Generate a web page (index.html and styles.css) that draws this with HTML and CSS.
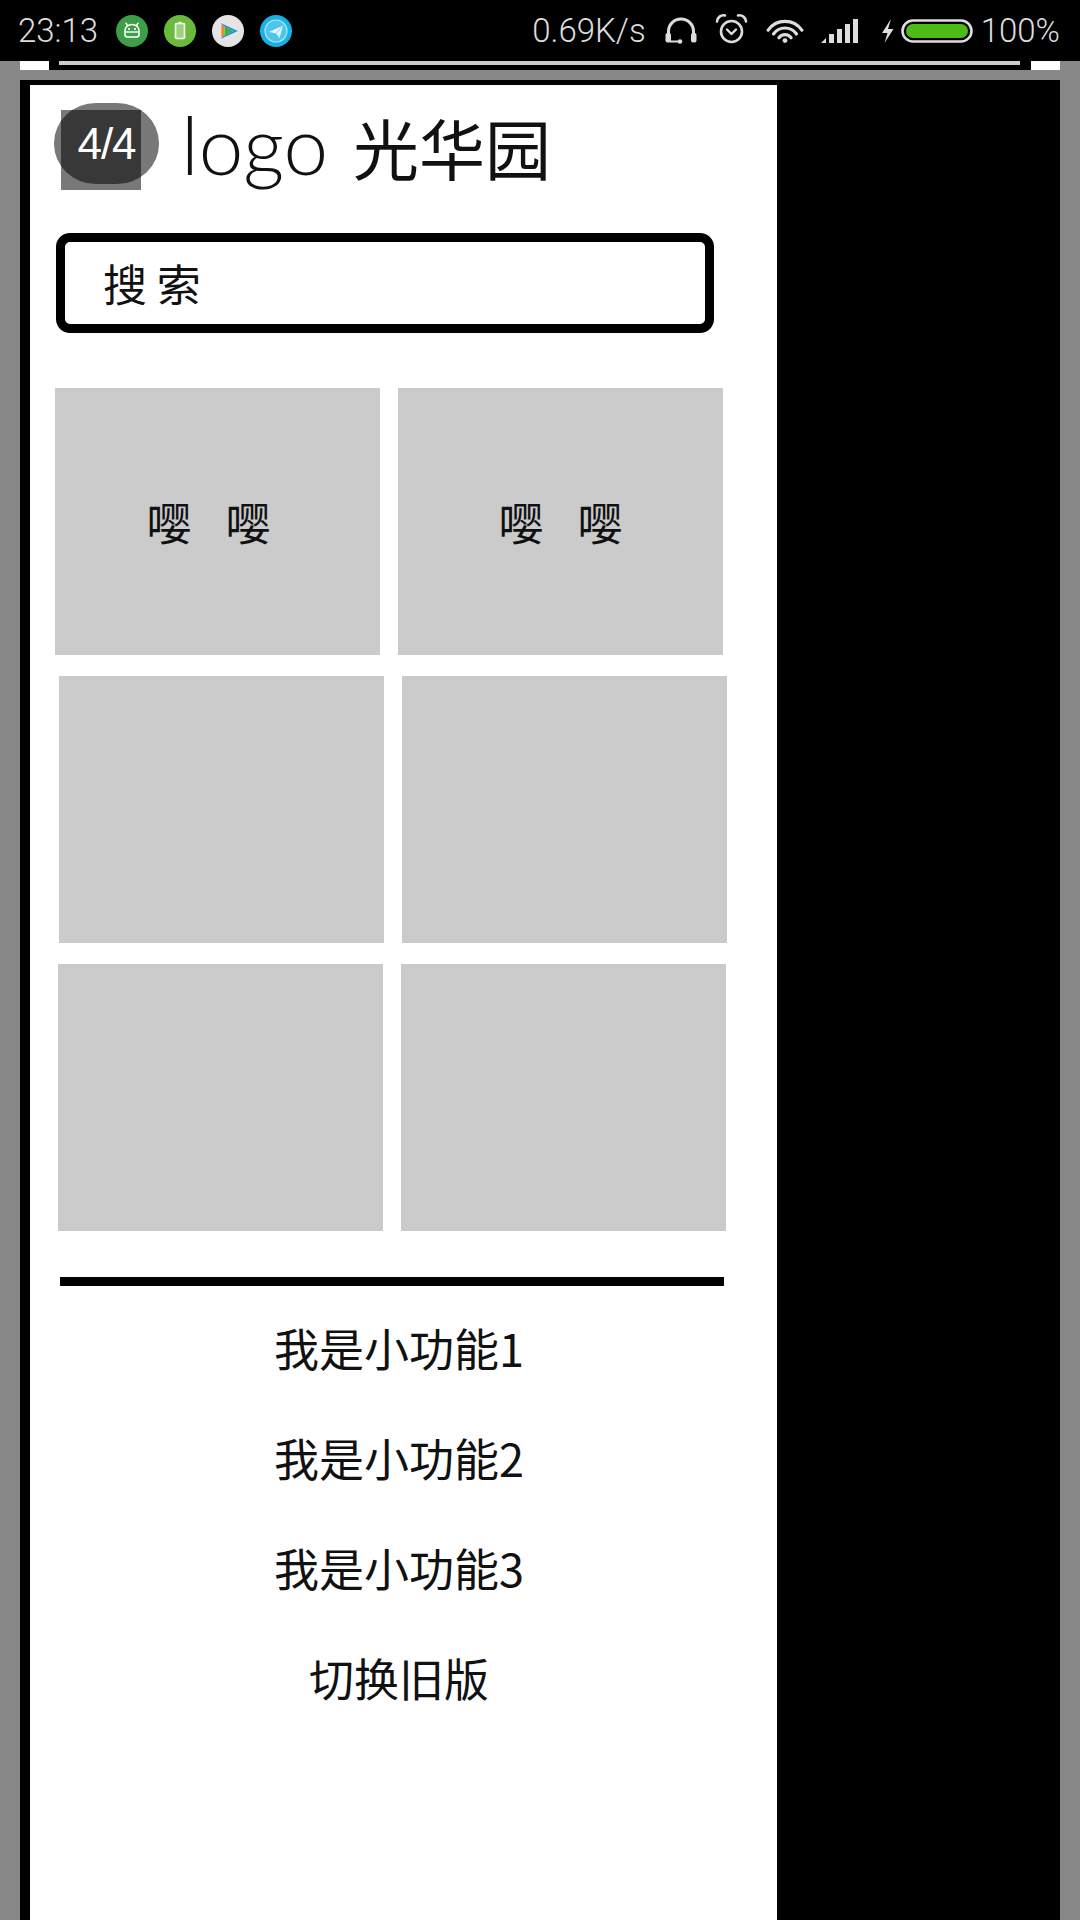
FILE: index.html
```html
<!DOCTYPE html>
<html lang="zh-CN">
<head>
  <meta charset="UTF-8" />
  <meta name="viewport" content="width=device-width, initial-scale=1.0" />
  <title>光华园</title>
  <link rel="stylesheet" href="styles.css">
</head>
<body>
  <div class="statusbar">
    <div class="sb-left">
      <span class="sb-time">23:13</span>
      <svg class="app-icon" width="32" height="32" viewBox="0 0 32 32">
        <circle cx="16" cy="16" r="16" fill="#3d9e47"/>
        <path d="M11.5 10.5 L10 8.2 M20.5 10.5 L22 8.2" stroke="#fff" stroke-width="1.5" stroke-linecap="round"/>
        <path d="M9 19.5 V15.5 a7 6 0 0 1 14 0 V19.5 a2.5 2.5 0 0 1 -2.5 2.5 H11.5 a2.5 2.5 0 0 1 -2.5 -2.5z" fill="none" stroke="#fff" stroke-width="1.6"/>
        <circle cx="13" cy="14" r="1.1" fill="#fff"/>
        <circle cx="19" cy="14" r="1.1" fill="#fff"/>
        <path d="M9.5 17 H22.5" stroke="#fff" stroke-width="1.4"/>
      </svg>
      <svg class="app-icon" width="32" height="32" viewBox="0 0 32 32">
        <circle cx="16" cy="16" r="16" fill="#6bbb3b"/>
        <rect x="11.5" y="8.5" width="9" height="15" rx="1.2" fill="#9ad47a" stroke="#fff" stroke-width="1.6"/>
        <path d="M14.5 7.5 H17.5" stroke="#fff" stroke-width="1.4"/>
      </svg>
      <svg class="app-icon" width="32" height="32" viewBox="0 0 32 32">
        <circle cx="16" cy="16" r="16" fill="#e4e4e4"/>
        <path d="M8.5 8 L26 16 L8.5 24 L11 21 L21.5 16 L11 11z" fill="#2b8de2"/>
        <path d="M12.5 11.2 L21.5 16 L12.5 20.8z" fill="#31b550"/>
        <path d="M9.3 10.2 L12.5 11.2 L12.5 20.8 L9.3 21.8z" fill="#f08a24"/>
      </svg>
      <svg class="app-icon" width="32" height="32" viewBox="0 0 32 32">
        <circle cx="16" cy="16" r="16" fill="#19b1e5"/>
        <circle cx="16" cy="16" r="11" fill="#4cc6ee" stroke="#a9e6f8" stroke-width="1.2"/>
        <path d="M9 17 L23 10.5 L19.5 23 L16 18.5z" fill="#e3f7fd"/>
        <path d="M16 18.5 L23 10.5" stroke="#7fd3f0" stroke-width="1"/>
      </svg>
    </div>
    <div class="sb-right">
      <span class="sb-speed">0.69K/s</span>
      <svg class="sys-icon headphone" width="34" height="27" viewBox="0 0 34 27">
        <path d="M4.5 19 V14.5 a12.5 12.5 0 0 1 25 0 V19" fill="none" stroke="#ddd" stroke-width="3"/>
        <rect x="1.5" y="16" width="5.5" height="9.5" rx="2" fill="#ddd"/>
        <rect x="27" y="16" width="5.5" height="9.5" rx="2" fill="#ddd"/>
        <path d="M6 24.5 H15" stroke="#ddd" stroke-width="2"/>
        <circle cx="16" cy="24.5" r="2.3" fill="#ddd"/>
      </svg>
      <svg class="sys-icon alarm" width="35" height="31" viewBox="0 0 35 31">
        <circle cx="17.5" cy="18.5" r="10.5" fill="none" stroke="#ddd" stroke-width="2.6"/>
        <path d="M3 8.5 a6.5 6.5 0 0 1 8 -6" fill="none" stroke="#ddd" stroke-width="2.6" stroke-linecap="round"/>
        <path d="M32 8.5 a6.5 6.5 0 0 0 -8 -6" fill="none" stroke="#ddd" stroke-width="2.6" stroke-linecap="round"/>
        <path d="M13 16.5 L17.5 21 L22 16.5" fill="none" stroke="#ddd" stroke-width="2.4" stroke-linecap="round" stroke-linejoin="round"/>
      </svg>
      <svg class="sys-icon wifi" width="38" height="24" viewBox="0 0 38 24">
        <path d="M2.2 11.2 A20.5 20.5 0 0 1 35.8 11.2" fill="none" stroke="#ddd" stroke-width="3.2" stroke-linecap="round"/>
        <path d="M7.5 15 A14 14 0 0 1 30.5 15" fill="none" stroke="#ddd" stroke-width="3.2" stroke-linecap="round"/>
        <path d="M12.9 18.7 A7.5 7.5 0 0 1 25.1 18.7" fill="none" stroke="#ddd" stroke-width="3.2" stroke-linecap="round"/>
        <circle cx="19" cy="21.6" r="2.4" fill="#ddd"/>
      </svg>
      <svg class="sys-icon signal" width="38" height="24" viewBox="0 0 38 24">
        <path d="M0 24 L5 19 L5 24z" fill="#ddd"/>
        <rect x="8" y="15" width="5" height="9" fill="#ddd"/>
        <rect x="16" y="10" width="5" height="14" fill="#ddd"/>
        <rect x="24" y="5" width="5" height="19" fill="#ddd"/>
        <rect x="32" y="0" width="5" height="24" fill="#ddd"/>
      </svg>
      <svg class="sys-icon bolt" width="15" height="26" viewBox="0 0 15 26">
        <path d="M11 1 L2 15 H7.5 L4.5 25 L13.5 11 H8 Z" fill="#ddd"/>
      </svg>
      <svg class="sys-icon battery" width="72" height="24" viewBox="0 0 72 24">
        <rect x="1.5" y="1.5" width="69" height="21" rx="10.5" fill="none" stroke="#ddd" stroke-width="2.6"/>
        <rect x="5" y="5" width="62" height="14" rx="7" fill="#4cbb17"/>
      </svg>
      <span class="sb-pct">100%</span>
    </div>
  </div>

  <div class="strip">
    <span class="strip-edge"></span>
    <span class="strip-white"></span>
    <span class="strip-black"></span>
    <span class="strip-line"></span>
    <span class="strip-black wide"></span>
    <span class="strip-white"></span>
    <span class="strip-edge"></span>
  </div>
  <div class="band"></div>

  <div class="frame">
    <div class="panel">
      <header class="top">
        <div class="counter">
          <span class="counter-box"></span>
          <span class="counter-pill">4/4</span>
        </div>
        <h1 class="title"><span class="title-latin">logo</span> <span class="title-cjk">光华园</span></h1>
      </header>

      <div class="search">搜 索</div>

      <section class="grid">
        <div class="row row-1">
          <div class="cell cell-shift"><span>嘤</span><span>嘤</span></div>
          <div class="cell"><span>嘤</span><span>嘤</span></div>
        </div>
        <div class="row row-2">
          <div class="cell"></div>
          <div class="cell"></div>
        </div>
        <div class="row row-3">
          <div class="cell"></div>
          <div class="cell"></div>
        </div>
      </section>

      <hr class="divider">

      <ul class="features">
        <li>我是小功能1</li>
        <li>我是小功能2</li>
        <li>我是小功能3</li>
        <li>切换旧版</li>
      </ul>
    </div>
  </div>
</body>
</html>
```

FILE: styles.css
```css
:root {
  --page: #888888;
  --ink: #111;
  --cell: #cbcbcb;
  --status: #dddddd;
  --cjk: "Noto Sans CJK SC", "Noto Sans", sans-serif;
}
* { box-sizing: border-box; }
body {
  margin: 0;
  width: 1080px;
  height: 1920px;
  overflow: hidden;
  background: var(--page);
  font-family: var(--cjk);
  color: var(--ink);
}

/* status bar */
.statusbar {
  height: 61px;
  background: #000;
  display: flex;
  justify-content: space-between;
  align-items: center;
  padding: 0 20px 0 18px;
  color: var(--status);
  font-family: Roboto, "Liberation Sans", sans-serif;
  font-weight: 300;
  font-size: 33px;
}
.sb-left, .sb-right {
  display: flex;
  align-items: center;
}
.sb-time { margin-right: 1px; }
.app-icon { margin-left: 16px; }
.sb-left .app-icon:first-of-type { margin-left: 17px; }
.sys-icon { display: block; }
.headphone { margin-left: 18px; }
.alarm { margin-left: 16px; margin-top: -4px; }
.wifi { margin-left: 17px; }
.signal { margin-left: 17px; }
.bolt { margin-left: 21px; }
.battery { margin-left: 6px; }
.sb-pct { margin-left: 8px; }

/* thin strip under the status bar */
.strip {
  height: 9px;
  display: flex;
}
.strip-edge { width: 20px; }
.strip-white { width: 29px; background: #fff; }
.strip-black { width: 10px; background: #000; }
.strip-black.wide { width: 11px; }
.strip-line {
  flex: 1;
  background: #000;
  border-top: 4px solid #cccccc;
}
.band { height: 10px; }

/* framed web view */
.frame {
  margin: 0 20px;
  height: 1840px;
  background: #000;
  padding: 5px 0 0 10px;
}
.panel {
  width: 747px;
  height: 100%;
  background: #fff;
}

.top {
  position: relative;
  height: 126px;
  display: flex;
  align-items: center;
  padding-left: 151px;
}
.title {
  margin: 0 0 8px;
  font-size: 66px;
  font-weight: 400;
  line-height: 1;
  color: var(--ink);
  white-space: nowrap;
}
.title-latin {
  font-family: Lato, var(--cjk);
  font-weight: 300;
  font-size: 80px;
}
.title-cjk {
  margin-left: 10px;
  font-size: 66px;
}
.counter {
  position: absolute;
  left: 24px;
  top: 18px;
  width: 105px;
  height: 87px;
}
.counter-box {
  position: absolute;
  left: 7px;
  top: 7px;
  width: 80px;
  height: 80px;
  background: rgba(0,0,0,0.53);
}
.counter-pill {
  position: absolute;
  left: 0;
  top: 0;
  width: 105px;
  height: 81px;
  border-radius: 42px / 40px;
  background: rgba(0,0,0,0.53);
  display: flex;
  justify-content: center;
  align-items: center;
  color: #fff;
  font-family: "Liberation Sans", Arial, sans-serif;
  font-size: 44px;
  letter-spacing: -1px;
}

.search {
  width: 658px;
  height: 100px;
  margin: 22px 0 0 26px;
  border: 9px solid #000;
  border-radius: 14px;
  display: flex;
  align-items: center;
  padding-left: 38px;
  font-size: 44px;
}

.grid { margin-top: 55px; }
.row {
  display: flex;
  gap: 18px;
  height: 267px;
}
.row-1 { padding-left: 25px; }
.row-2 { padding-left: 29px; margin-top: 21px; }
.row-3 { padding-left: 28px; margin-top: 21px; }
.cell {
  width: 325px;
  height: 100%;
  background: var(--cell);
  display: flex;
  justify-content: center;
  align-items: center;
  gap: 34px;
  font-size: 45px;
}
.cell-shift { padding-right: 18px; }

.divider {
  width: 664px;
  height: 9px;
  margin: 46px 0 0 30px;
  border: none;
  background: #000;
}

.features {
  list-style: none;
  margin: 7px 0 0;
  padding: 0;
  width: 738px;
  text-align: center;
}
.features li {
  font-size: 45px;
  line-height: 110px;
}
```
